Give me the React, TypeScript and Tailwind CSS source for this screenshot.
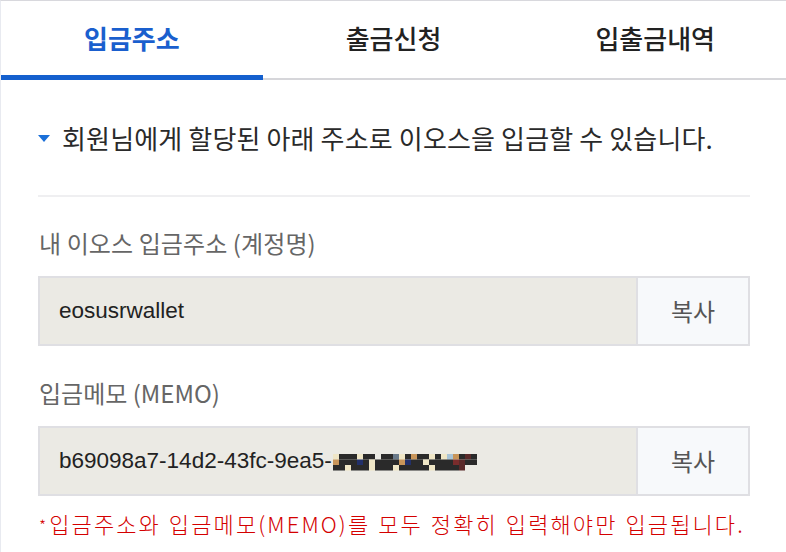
import React from "react";

const KR = "font-['Noto_Sans_CJK_KR','Noto_Sans',sans-serif]";

function Mosaic() {
  const pal: Record<string, string> = {
    d: "#2a2a2a",
    c: "#efe6c6",
    o: "#c8955a",
    n: "#22306a",
    r: "#7a2c2c",
    b: "#a8c4d8",
    g: "#6a7a8a",
    m: "#5a2a2a",
    ".": "",
  };
  const rows = [
    "cdddcdd.ddgcdoddcdcbodmd",
    "odddndcddddonddcddddrmdd",
    "ddcdddcdddcdddddcddddm..",
  ];
  const cells: React.ReactElement[] = [];
  rows.forEach((row, r) => {
    row.split("").forEach((ch, c) => {
      if (pal[ch]) cells.push(<rect key={`${r}-${c}`} x={c * 6} y={r * 5.5} width={6} height={5.5} fill={pal[ch]} />);
    });
  });
  return (
    <svg width="144" height="17" viewBox="0 0 144 17" className="ml-[1px] mt-[2px]">
      {cells}
    </svg>
  );
}

export default function App() {
  return (
    <div className={`w-[786px] h-[552px] bg-white border-t border-l border-t-[#d8d8dd] border-l-[#e8eaf0] ${KR} overflow-hidden`}>
      <div className="flex h-[79px]">
        <div className="flex-1 relative flex items-center justify-center border-b-2 border-[#d6d6da]">
          <span className="text-[26px] font-bold text-[#1a5fce] -mt-[4px]">입금주소</span>
          <div className="absolute left-0 right-0 -bottom-[2px] h-[5px] bg-[#1460ce]" />
        </div>
        <div className="flex-1 flex items-center justify-center border-b-2 border-[#d6d6da]">
          <span className="text-[26px] font-medium text-[#222] -mt-[4px]">출금신청</span>
        </div>
        <div className="flex-1 flex items-center justify-center border-b-2 border-[#d6d6da]">
          <span className="text-[26px] font-medium text-[#222] -mt-[4px]">입출금내역</span>
        </div>
      </div>

      <div className="pl-[37px] pr-[36px]">
        <div className="h-[117px] flex items-center border-b-2 border-[#efeff1]">
          <div className="w-0 h-0 border-l-[6px] border-r-[6px] border-t-[7px] border-l-transparent border-r-transparent border-t-[#1a6fd8] mt-[2px]" />
          <span className="ml-[12px] text-[26px] text-[#2a2a2a] tracking-[0.15px] whitespace-nowrap">
            회원님에게 할당된 아래 주소로 이오스을 입금할 수 있습니다.
          </span>
        </div>

        <div className="mt-[31px] h-[30px] flex items-center text-[24px] text-[#666] pl-[1px] tracking-[0.1px]">
          내 이오스 입금주소 (계정명)
        </div>
        <div className="mt-[18px] flex h-[70px] border-2 border-[#dfdfe3]">
          <div className="flex-1 bg-[#ebeae4] flex items-center pl-[19px] font-['Liberation_Sans',Arial,sans-serif] text-[22.5px] text-[#222]">
            eosusrwallet
          </div>
          <div className="w-[112px] bg-[#f7f9fb] border-l-2 border-[#dfdfe3] flex items-center justify-center text-[24px] text-[#555]">
            복사
          </div>
        </div>

        <div className="mt-[32px] h-[30px] flex items-center text-[24px] text-[#666] pl-[1px]">
          입금메모 (MEMO)
        </div>
        <div className="mt-[18px] flex h-[70px] border-2 border-[#dfdfe3]">
          <div className="flex-1 bg-[#ebeae4] flex items-center pl-[19px] font-['Liberation_Sans',Arial,sans-serif] text-[22.5px] text-[#222]">
            b69098a7-14d2-43fc-9ea5-
            <Mosaic />
          </div>
          <div className="w-[112px] bg-[#f7f9fb] border-l-2 border-[#dfdfe3] flex items-center justify-center text-[24px] text-[#555]">
            복사
          </div>
        </div>

        <div className="mt-[12px] h-[30px] flex items-center text-[22px] font-light text-[#d40000] pl-[1px] tracking-[2.1px] [word-spacing:1px] whitespace-nowrap">
          <span className="text-[16px] mr-[1px] mt-[4px]">*</span>
          <span>입금주소와 입금메모(MEMO)를 모두 정확히 입력해야만 입금됩니다.</span>
        </div>
      </div>
    </div>
  );
}
